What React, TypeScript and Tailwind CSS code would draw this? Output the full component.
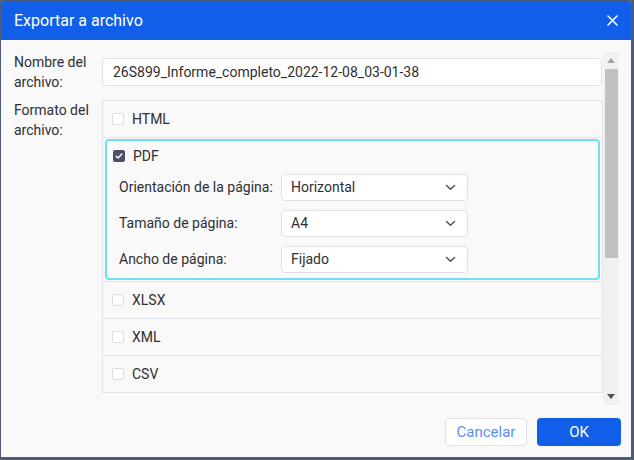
import React from 'react';

const font = { fontFamily: 'Roboto, "Liberation Sans", sans-serif' };

const Checkbox: React.FC<{ checked?: boolean }> = ({ checked }) =>
  checked ? (
    <span className="w-[12px] h-[12px] rounded-[2px] bg-[#4b5267] flex items-center justify-center shrink-0">
      <svg width="8" height="8" viewBox="0 0 8 8" fill="none">
        <path d="M1.2 4.2 L3.1 6 L6.8 2" stroke="#fff" strokeWidth="1.5" strokeLinecap="round" strokeLinejoin="round" />
      </svg>
    </span>
  ) : (
    <span className="w-[12px] h-[12px] rounded-[2px] bg-white border border-[#dcdde3] shrink-0" />
  );

const Chevron = () => (
  <svg width="11" height="7" viewBox="0 0 11 7" fill="none">
    <path d="M1.5 1.5 L5.5 5.2 L9.5 1.5" stroke="#4b5267" strokeWidth="1.5" strokeLinecap="round" strokeLinejoin="round" />
  </svg>
);

const FormatRow: React.FC<{ label: string }> = ({ label }) => (
  <div className="h-[37px] flex items-center gap-[8px] pl-[9px] border-b border-[#e3e4ea]">
    <Checkbox />
    <span className="text-[14px] text-[#2f2f33]">{label}</span>
  </div>
);

const SelectRow: React.FC<{ label: string; value: string }> = ({ label, value }) => (
  <div className="flex items-center">
    <span className="w-[174px] shrink-0 whitespace-nowrap pl-[12px] text-[14px] text-[#2f2f33]">{label}</span>
    <div className="w-[187px] shrink-0 h-[27px] bg-white border border-[#dfe0e6] rounded-[4px] flex items-center justify-between pl-[9px] pr-[11px]">
      <span className="text-[14px] text-[#2f2f33]">{value}</span>
      <Chevron />
    </div>
  </div>
);

export default function App() {
  return (
    <div className="w-[634px] h-[460px] bg-[#4e5b77] pt-[1px] pl-[1px]" style={font}>
      <div className="w-[630px] h-[456px] bg-[#f9f9f9] rounded-t-[4px] overflow-hidden flex flex-col">
        {/* Header */}
        <div className="h-[39px] bg-[#115fe8] flex items-center justify-between pl-[13px] pr-[13px] shrink-0">
          <span className="text-[16px] text-white">Exportar a archivo</span>
          <svg width="11" height="11" viewBox="0 0 11 11" fill="none">
            <path d="M1 1 L10 10 M10 1 L1 10" stroke="#fff" strokeWidth="1.6" strokeLinecap="round" />
          </svg>
        </div>

        {/* Body */}
        <div className="flex pl-[13px] pr-[12px] pt-[12px]">
          <div className="flex-1 h-[353px] overflow-hidden flex flex-col">
            <div className="flex">
              <div className="w-[88px] shrink-0 text-[14px] leading-[20px] text-[#2f2f33]">
                Nombre del<br />archivo:
              </div>
              <div className="flex-1 mr-[1px] mt-[6px] h-[28px] bg-white border border-[#dfe0e6] rounded-[4px] flex items-center pl-[10px] text-[14px] text-[#2f2f33]">
                26S899_Informe_completo_2022-12-08_03-01-38
              </div>
            </div>

            <div className="flex mt-[8px]">
              <div className="w-[88px] shrink-0 text-[14px] leading-[20px] text-[#2f2f33]">
                Formato del<br />archivo:
              </div>
              <div className="flex-1 border-l border-r border-t border-[#e3e4ea]">
                <FormatRow label="HTML" />
                <div className="border-b border-[#e3e4ea] px-[2px] py-[1px]">
                  <div className="border-2 border-[#6ddfee] rounded-[4px] pt-[7px] pb-[5px]">
                    <div className="flex items-center gap-[8px] pl-[6px] h-[16px]">
                      <Checkbox checked />
                      <span className="text-[14px] text-[#2f2f33]">PDF</span>
                    </div>
                    <div className="flex flex-col gap-[9px] mt-[10px]">
                      <SelectRow label="Orientación de la página:" value="Horizontal" />
                      <SelectRow label="Tamaño de página:" value="A4" />
                      <SelectRow label="Ancho de página:" value="Fijado" />
                    </div>
                  </div>
                </div>
                <FormatRow label="XLSX" />
                <FormatRow label="XML" />
                <FormatRow label="CSV" />
              </div>
            </div>
          </div>

          {/* Scrollbar */}
          <div className="w-[16px] h-[353px] bg-[#f1f1f1] flex flex-col items-center">
            <div className="h-[17px] flex items-center justify-center">
              <svg width="8" height="5" viewBox="0 0 8 5"><path d="M0 5 L4 0 L8 5 Z" fill="#a3a3a3" /></svg>
            </div>
            <div className="w-[13px] h-[189px] bg-[#c1c1c1]" />
            <div className="flex-1" />
            <div className="h-[17px] flex items-center justify-center">
              <svg width="8" height="5" viewBox="0 0 8 5"><path d="M0 0 L8 0 L4 5 Z" fill="#505050" /></svg>
            </div>
          </div>
        </div>

        {/* Footer */}
        <div className="flex justify-end gap-[10px] pr-[10px] mt-[13px]">
          <button className="w-[82px] h-[28px] bg-white border border-[#dfe0e6] rounded-[4px] text-[15px] text-[#5d8ff0]">
            Cancelar
          </button>
          <button className="w-[84px] h-[28px] bg-[#115fe8] rounded-[4px] text-[15px] text-white">
            OK
          </button>
        </div>
      </div>
    </div>
  );
}
